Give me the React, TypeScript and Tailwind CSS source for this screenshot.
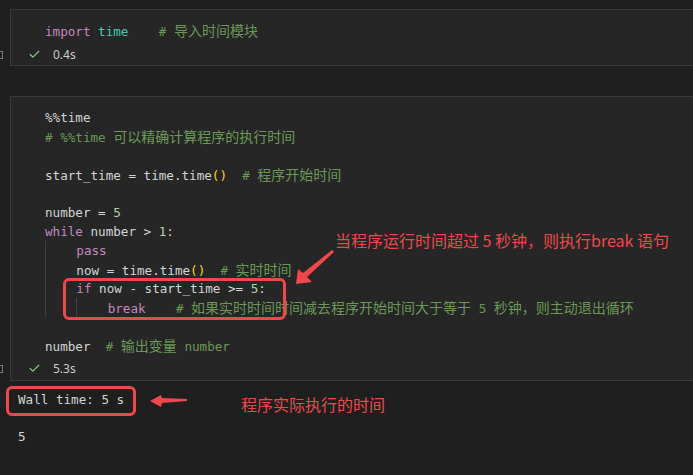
import { Check } from "lucide-react";

type Tok = [string, string];

const def = "text-[#d4d4d4]";
const kw = "text-[#c586c0]";
const mod = "text-[#4ec9b0]";
const cm = "text-[#6a9955]";
const num = "text-[#b5cea8]";
const br = "text-[#ffd700]";
const zh = "zh";

const mono = "font-['DejaVu_Sans_Mono','Noto_Sans_CJK_SC',monospace] text-[12.6px]";

const lines: { indent: number; toks: Tok[] }[] = [
  { indent: 0, toks: [["%%time", def]] },
  { indent: 0, toks: [["# %%time ", cm], ["可以精确计算程序的执行时间", zh]] },
  { indent: 0, toks: [] },
  {
    indent: 0,
    toks: [
      ["start_time = time.time", def],
      ["()", br],
      ["  # ", cm],
      ["程序开始时间", zh],
    ],
  },
  { indent: 0, toks: [] },
  { indent: 0, toks: [["number = ", def], ["5", num]] },
  { indent: 0, toks: [["while", kw], [" number > ", def], ["1", num], [":", def]] },
  { indent: 1, toks: [["pass", kw]] },
  {
    indent: 1,
    toks: [
      ["now = time.time", def],
      ["()", br],
      ["  # ", cm],
      ["实时时间", zh],
    ],
  },
  {
    indent: 1,
    toks: [["if", kw], [" now - start_time >= ", def], ["5", num], [":", def]],
  },
  {
    indent: 2,
    toks: [
      ["break", kw],
      ["    # ", cm],
      ["如果实时时间时间减去程序开始时间大于等于", zh],
      [" 5 ", cm],
      ["秒钟，则主动退出循环", zh],
    ],
  },
  { indent: 0, toks: [] },
  { indent: 0, toks: [["number", def], ["  # ", cm], ["输出变量", zh], [" number", cm]] },
];

function CodeLine({ indent, toks }: { indent: number; toks: Tok[] }) {
  const guides = [];
  for (let i = 0; i < indent; i++) {
    guides.push(
      <span key={i} className="inline-block h-[19px] border-l border-[#404040] align-top">
        {"    "}
      </span>
    );
  }
  return (
    <div className={`h-[19px] leading-[19px] whitespace-pre ${mono}`}>
      {guides}
      {toks.map(([t, c], i) =>
        c === zh ? (
          <span key={i} className="text-[#6a9955] text-[14px] font-['Noto_Sans_CJK_SC',sans-serif]">
            {t}
          </span>
        ) : (
          <span key={i} className={c}>
            {t}
          </span>
        )
      )}
      {toks.length === 0 ? " " : null}
    </div>
  );
}

function Status({ time }: { time: string }) {
  return (
    <div className="flex h-[21px] items-center pl-[17px] gap-[12px]">
      <Check size={13} strokeWidth={2} className="text-[#89d185]" />
      <span className="font-['Noto_Sans',sans-serif] text-[12px] text-[#cccccc]">{time}</span>
    </div>
  );
}

export default function App() {
  return (
    <div className="relative w-[693px] h-[475px] overflow-hidden bg-[#1f1f1f]">
      <div className="pt-[9px]">
        {/* Cell 1 */}
        <div className="ml-[10px] border-y border-l border-[#3a3a3d] bg-[#262626]">
          <div className="pt-[11px] pl-[34px]">
            <CodeLine
              indent={0}
              toks={[
                ["import", kw],
                [" ", def],
                ["time", mod],
                ["    # ", cm],
                ["导入时间模块", zh],
              ]}
            />
          </div>
          <div className="mt-[4px]">
            <Status time="0.4s" />
          </div>
        </div>

        {/* Cell 2 */}
        <div className="mt-[30px] ml-[10px] border-y border-l border-[#3a3a3d] bg-[#262627]">
          <div className="pt-[11px] pl-[34px]">
            {lines.map((l, i) => (
              <CodeLine key={i} indent={l.indent} toks={l.toks} />
            ))}
          </div>
          <div className="mt-[3px] pb-[1px]">
            <Status time="5.3s" />
          </div>
        </div>

        {/* Output */}
        <div className="pl-[18px] pt-[9px]">
          <div className={`h-[19px] leading-[19px] whitespace-pre text-[#d4d4d4] ${mono}`}>Wall time: 5 s</div>
          <div className={`mt-[18px] h-[19px] leading-[19px] text-[#d4d4d4] ${mono}`}>5</div>
        </div>
      </div>

      {/* collapse markers */}
      <div className="absolute left-[-2px] top-[51px] h-[8px] w-[5px] border border-[#7a7a7a]" />
      <div className="absolute left-[-2px] top-[365px] h-[8px] w-[5px] border border-[#7a7a7a]" />

      {/* annotations */}
      <div className="absolute left-[63px] top-[278px] h-[42px] w-[223px] rounded-[6px] border-[3px] border-[#ef4848]" />
      <div className="absolute left-[6px] top-[386px] h-[30px] w-[130px] rounded-[6px] border-[3px] border-[#ef4848]" />

      <div className="absolute left-[335px] top-[229px] whitespace-pre font-['Noto_Sans_CJK_SC',sans-serif] text-[16px] leading-[22px] text-[#ef4848]">
        当程序运行时间超过 5 秒钟，则执行break 语句
      </div>
      <div className="absolute left-[241px] top-[393px] whitespace-pre font-['Noto_Sans_CJK_SC',sans-serif] text-[16px] leading-[22px] text-[#ef4848]">
        程序实际执行的时间
      </div>

      <svg className="absolute left-0 top-0" width="693" height="475" viewBox="0 0 693 475">
        <polygon
          points="334,252 307,277 312,282 296,284 298,269 303,273 332,250"
          fill="#f04848"
        />
        <polygon
          points="187,399 162,398 161,395 150,401 161,407 162,403 187,401"
          fill="#f04848"
        />
      </svg>
    </div>
  );
}
